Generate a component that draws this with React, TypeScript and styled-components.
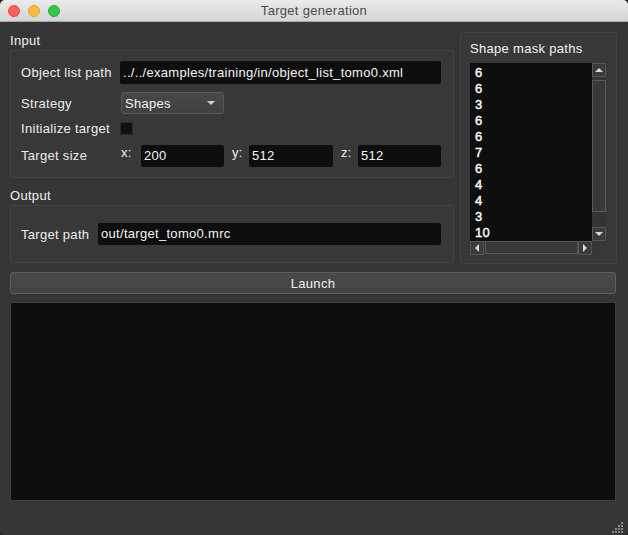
import React from "react";
import styled, { createGlobalStyle } from "styled-components";

const Global = createGlobalStyle`
  html, body { margin: 0; padding: 0; background: #1e1e1e; }
  body { font-family: "Liberation Sans", Arial, sans-serif; font-size: 13px; letter-spacing: 0.3px; }
  * { box-sizing: border-box; }
`;

const Window = styled.div`
  width: 628px;
  height: 535px;
  background: #363636;
  border-radius: 5px;
  overflow: hidden;
  display: flex;
  flex-direction: column;
  position: relative;
  color: #ececec;
`;

const TitleBar = styled.div`
  height: 22px;
  flex: none;
  background: linear-gradient(#ebebeb, #d5d5d5);
  border-bottom: 1px solid #a9a9a9;
  display: flex;
  align-items: center;
  justify-content: center;
  position: relative;
  color: #4b4b4b;
  font-size: 13px;
`;

const Lights = styled.div`
  position: absolute;
  left: 8px;
  top: 5px;
  display: flex;
  gap: 8px;
`;

const Light = styled.span<{ $c: string; $b: string }>`
  width: 12px;
  height: 12px;
  border-radius: 50%;
  background: ${(p) => p.$c};
  border: 1px solid ${(p) => p.$b};
`;

const Body = styled.div`
  flex: 1;
  display: flex;
  flex-direction: column;
  padding: 10px 11px 34px 10px;
`;

const TopArea = styled.div`
  display: flex;
  gap: 6px;
  height: 232px;
`;

const LeftColumn = styled.div`
  width: 444px;
  display: flex;
  flex-direction: column;
`;

const SectionTitle = styled.div<{ $mt?: number }>`
  height: 16px;
  line-height: 16px;
  margin-top: ${(p) => p.$mt ?? 0}px;
  margin-bottom: 2px;
  padding-top: 1px;
  color: #f0f0f0;
`;

const Group = styled.div`
  border: 1px solid #434343;
  border-radius: 3px;
  background: #383838;
`;

const InputGroup = styled(Group)`
  height: 128px;
  padding: 10px 12px 0 10px;
  display: grid;
  grid-template-columns: 99px 1fr;
  grid-template-rows: 23px 22px 14px 22px;
  row-gap: 8px;
  align-items: center;
  & > :nth-child(5), & > :nth-child(6) { margin-top: -1px; }
  & > :nth-child(7), & > :nth-child(8) { margin-top: 1px; }
`;

const OutputGroup = styled(Group)`
  height: 58px;
  padding: 0 12px 0 10px;
  display: flex;
  align-items: center;
`;

const Label = styled.div<{ $w?: number }>`
  white-space: nowrap;
  color: #ececec;
  ${(p) => (p.$w ? `width: ${p.$w}px; flex: none;` : "")}
`;

const TextField = styled.div<{ $h?: number }>`
  height: ${(p) => p.$h ?? 22}px;
  line-height: ${(p) => p.$h ?? 22}px;
  background: #0e0e0e;
  border-radius: 2px;
  padding-left: 3px;
  color: #f4f4f4;
  white-space: nowrap;
  overflow: hidden;
  flex: 1;
  min-width: 0;
`;

const Combo = styled.div`
  width: 103px;
  height: 22px;
  margin-left: 1px;
  border: 1px solid #585858;
  border-radius: 3px;
  background: linear-gradient(#484848, #414141);
  display: flex;
  align-items: center;
  justify-content: space-between;
  padding: 0 8px 0 3px;
  color: #f2f2f2;
`;

const Arrow = styled.span`
  width: 0;
  height: 0;
  border-left: 4px solid transparent;
  border-right: 4px solid transparent;
  border-top: 4px solid #cfcfcf;
`;

const CheckBox = styled.div`
  width: 13px;
  height: 13px;
  background: #111;
  border: 1px solid #2c2c2c;
  border-radius: 1px;
`;

const SizeRow = styled.div`
  display: flex;
  gap: 7px;
  height: 22px;
`;

const SizeField = styled.div<{ $w?: number }>`
  ${(p) => (p.$w ? `width: ${p.$w}px; flex: none;` : "flex: 1;")}
  display: flex;
  align-items: flex-start;
`;

const SizeLabel = styled.span<{ $w: number }>`
  width: ${(p) => p.$w}px;
  flex: none;
  padding-left: 1px;
  padding-top: 1px;
  line-height: 14px;
  color: #ececec;
`;

const RightGroup = styled(Group)`
  flex: 1;
  padding: 8px 10px 10px 9px;
  display: flex;
  flex-direction: column;
`;

const ListTitle = styled.div`
  height: 16px;
  line-height: 16px;
  margin-bottom: 6px;
  color: #f2f2f2;
`;

const ListBox = styled.div`
  flex: 1;
  display: grid;
  grid-template-columns: 1fr 14px;
  grid-template-rows: 1fr 13px;
`;

const ListContent = styled.div`
  background: #0e0e0e;
  padding: 2px 0 0 5px;
  overflow: hidden;
`;

const ListItem = styled.div`
  height: 16px;
  line-height: 16px;
  color: #fff;
  font-size: 13px;
  -webkit-text-stroke: 0.4px #fff;
`;

const VScroll = styled.div`
  background: #333;
  display: flex;
  flex-direction: column;
`;

const HScroll = styled.div`
  background: #333;
  display: flex;
`;

const ScrollBtn = styled.div`
  width: 14px;
  height: 14px;
  flex: none;
  background: #3b3b3b;
  border: 1px solid #565656;
  display: flex;
  align-items: center;
  justify-content: center;
`;

const Tri = styled.span<{ $dir: "up" | "down" | "left" | "right" }>`
  width: 0;
  height: 0;
  ${(p) =>
    p.$dir === "up"
      ? "border-left:4px solid transparent;border-right:4px solid transparent;border-bottom:4px solid #d8d8d8;"
      : p.$dir === "down"
      ? "border-left:4px solid transparent;border-right:4px solid transparent;border-top:4px solid #d8d8d8;"
      : p.$dir === "left"
      ? "border-top:4px solid transparent;border-bottom:4px solid transparent;border-right:4px solid #d8d8d8;"
      : "border-top:4px solid transparent;border-bottom:4px solid transparent;border-left:4px solid #d8d8d8;"}
`;

const VHandle = styled.div`
  height: 132px;
  margin-top: 3px;
  background: #393939;
  border: 1px solid #595959;
`;

const HHandle = styled.div`
  width: 93px;
  margin-left: 1px;
  background: #393939;
  border: 1px solid #595959;
`;

const Spacer = styled.div`
  flex: 1;
`;

const Corner = styled.div`
  background: #363636;
`;

const LaunchButton = styled.div`
  margin-top: 8px;
  height: 22px;
  width: 606px;
  border: 1px solid #5d5d5d;
  border-radius: 3px;
  background: linear-gradient(#4a4a4a, #434343);
  display: flex;
  align-items: center;
  justify-content: center;
  color: #f0f0f0;
`;

const LogArea = styled.div`
  margin-top: 8px;
  flex: 1;
  width: 606px;
  background: #0e0e0e;
  border: 1px solid #3e3e3e;
`;

const Grip = styled.svg`
  position: absolute;
  right: 5px;
  bottom: 2px;
`;

const items = ["6", "6", "3", "6", "6", "7", "6", "4", "4", "3", "10"];

export default function App() {
  const dots: React.ReactNode[] = [];
  for (let r = 0; r < 4; r++) {
    for (let c = 0; c <= r; c++) {
      dots.push(
        <rect key={`${r}-${c}`} x={9 - c * 3} y={r * 3} width={2} height={2} fill="#8a8a8a" />
      );
    }
  }
  return (
    <>
      <Global />
      <Window>
        <TitleBar>
          <Lights>
            <Light $c="#fc615d" $b="#de4a45" />
            <Light $c="#fdbc40" $b="#dd9f31" />
            <Light $c="#34c84a" $b="#26a734" />
          </Lights>
          Target generation
        </TitleBar>
        <Body>
          <TopArea>
            <LeftColumn>
              <SectionTitle>Input</SectionTitle>
              <InputGroup>
                <Label>Object list path</Label>
                <TextField $h={23}>../../examples/training/in/object_list_tomo0.xml</TextField>
                <Label>Strategy</Label>
                <div>
                  <Combo>
                    Shapes
                    <Arrow />
                  </Combo>
                </div>
                <Label>Initialize target</Label>
                <CheckBox />
                <Label>Target size</Label>
                <SizeRow>
                  <SizeField $w={104}>
                    <SizeLabel $w={21}>x:</SizeLabel>
                    <TextField>200</TextField>
                  </SizeField>
                  <SizeField $w={102}>
                    <SizeLabel $w={18}>y:</SizeLabel>
                    <TextField>512</TextField>
                  </SizeField>
                  <SizeField>
                    <SizeLabel $w={18}>z:</SizeLabel>
                    <TextField>512</TextField>
                  </SizeField>
                </SizeRow>
              </InputGroup>
              <SectionTitle $mt={9}>Output</SectionTitle>
              <OutputGroup>
                <Label $w={77}>Target path</Label>
                <TextField>out/target_tomo0.mrc</TextField>
              </OutputGroup>
            </LeftColumn>
            <RightGroup>
              <ListTitle>Shape mask paths</ListTitle>
              <ListBox>
                <ListContent>
                  {items.map((t, i) => (
                    <ListItem key={i}>{t}</ListItem>
                  ))}
                </ListContent>
                <VScroll>
                  <ScrollBtn>
                    <Tri $dir="up" />
                  </ScrollBtn>
                  <VHandle />
                  <Spacer />
                  <ScrollBtn>
                    <Tri $dir="down" />
                  </ScrollBtn>
                </VScroll>
                <HScroll>
                  <ScrollBtn>
                    <Tri $dir="left" />
                  </ScrollBtn>
                  <HHandle />
                  <Spacer />
                  <ScrollBtn>
                    <Tri $dir="right" />
                  </ScrollBtn>
                </HScroll>
                <Corner />
              </ListBox>
            </RightGroup>
          </TopArea>
          <LaunchButton>Launch</LaunchButton>
          <LogArea />
        </Body>
        <Grip width="11" height="11" viewBox="0 0 11 11">
          {dots}
        </Grip>
      </Window>
    </>
  );
}
